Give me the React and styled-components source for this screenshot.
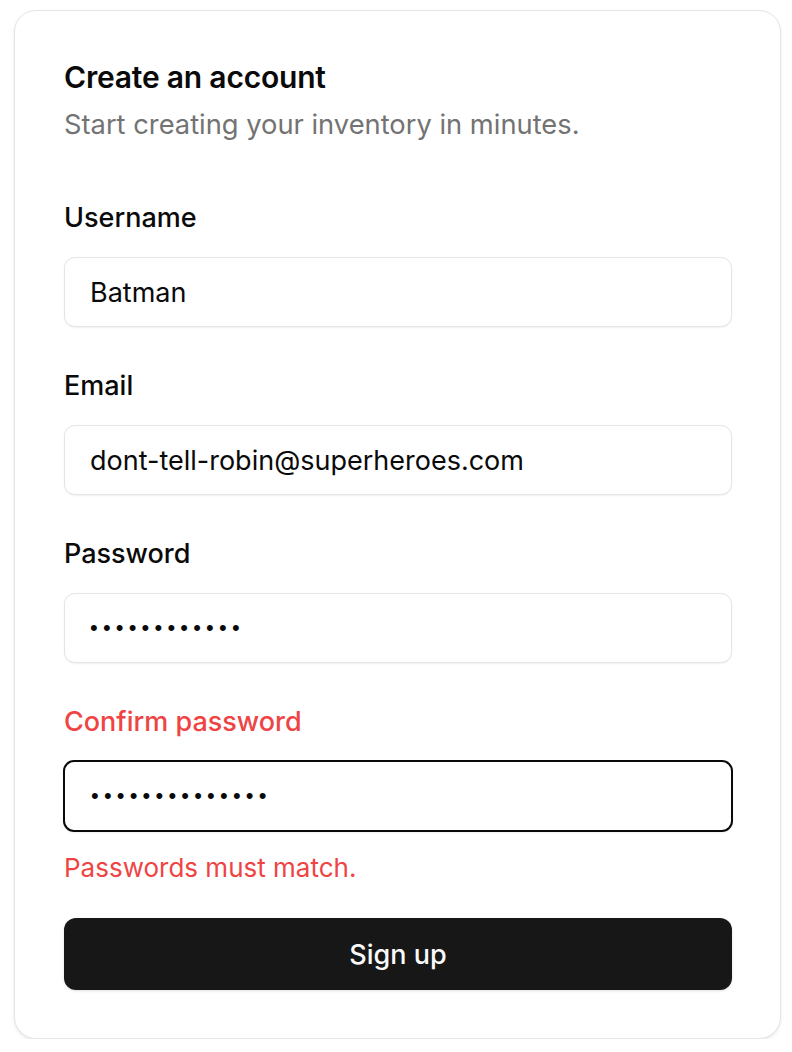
import styled, { createGlobalStyle } from "styled-components"

const GlobalStyle = createGlobalStyle`
  html, body {
    margin: 0;
    padding: 0;
    background: #ffffff;
  }
  body {
    font-family: Inter, "Noto Sans", "Liberation Sans", sans-serif;
    color: #0a0a0a;
  }
`

const Page = styled.div`
  padding: 10px 11px 0 14px;
`

const Card = styled.div`
  width: 767px;
  box-sizing: border-box;
  border: 1px solid #e5e5e5;
  border-radius: 22px;
  background: #ffffff;
  box-shadow: 0 2px 4px rgba(0, 0, 0, 0.06), 0 1px 2px rgba(0, 0, 0, 0.04);
  padding: 48px 48px 48px 49px;
`

const Header = styled.div`
  display: flex;
  flex-direction: column;
  gap: 14px;
  margin-bottom: 63px;
`

const Title = styled.h1`
  margin: 0;
  font-size: 30px;
  line-height: 36px;
  font-weight: 600;
  letter-spacing: -0.2px;
`

const Subtitle = styled.p`
  margin: 0;
  font-size: 27.3px;
  line-height: 32px;
  color: #737373;
`

const Form = styled.form`
  display: flex;
  flex-direction: column;
`

const Field = styled.div`
  display: flex;
  flex-direction: column;
  gap: 25px;
  margin-bottom: 45px;

  &:last-of-type {
    margin-bottom: 0;
  }
`

const Label = styled.label`
  font-size: 27px;
  line-height: 28px;
  font-weight: 500;
  color: ${props => (props.error ? "#ef4444" : "#0a0a0a")};
`

const Input = styled.input`
  box-sizing: border-box;
  margin: ${props => (props.focused ? "-1px" : "0")};
  width: ${props => (props.focused ? "calc(100% + 2px)" : "100%")};
  height: ${props => (props.focused ? "72px" : "70px")};
  padding: 0 ${props => (props.focused ? "26px" : "25px")};
  border: ${props => (props.focused ? "2px solid #0a0a0a" : "1px solid #e5e5e5")};
  border-radius: 11px;
  background: #ffffff;
  box-shadow: 0 1px 2px rgba(0, 0, 0, 0.06);
  font-family: ${props =>
    props.type === "password"
      ? '"Liberation Sans", Arial, sans-serif'
      : 'Inter, "Noto Sans", "Liberation Sans", sans-serif'};
  font-size: ${props => (props.type === "password" ? "22px" : "27px")};
  color: #0a0a0a;
  outline: none;
  letter-spacing: ${props => (props.type === "password" ? "5.2px" : "0")};
`

const ErrorText = styled.p`
  margin: 23px 0 0;
  font-size: 26px;
  line-height: 28px;
  font-weight: 400;
  color: #ef4444;
`

const Button = styled.button`
  margin-top: 36px;
  height: 72px;
  border: none;
  border-radius: 12px;
  background: #171717;
  color: #fafafa;
  font-family: Inter, "Noto Sans", "Liberation Sans", sans-serif;
  font-size: 27px;
  font-weight: 500;
  box-shadow: 0 1px 3px rgba(0, 0, 0, 0.12);
  cursor: pointer;
`

const App = () => {
  return (
    <Page>
      <GlobalStyle />
      <Card>
        <Header>
          <Title>Create an account</Title>
          <Subtitle>Start creating your inventory in minutes.</Subtitle>
        </Header>

        <Form onSubmit={e => e.preventDefault()}>
          <Field>
            <Label>Username</Label>
            <Input type="text" defaultValue="Batman" />
          </Field>

          <Field>
            <Label>Email</Label>
            <Input type="email" defaultValue="dont-tell-robin@superheroes.com" />
          </Field>

          <Field>
            <Label>Password</Label>
            <Input type="password" defaultValue="abcdefghijkl" />
          </Field>

          <Field>
            <Label error>Confirm password</Label>
            <Input type="password" focused defaultValue="abcdefghijklmn" />
          </Field>

          <ErrorText>Passwords must match.</ErrorText>

          <Button type="submit">Sign up</Button>
        </Form>
      </Card>
    </Page>
  )
}

export default App
